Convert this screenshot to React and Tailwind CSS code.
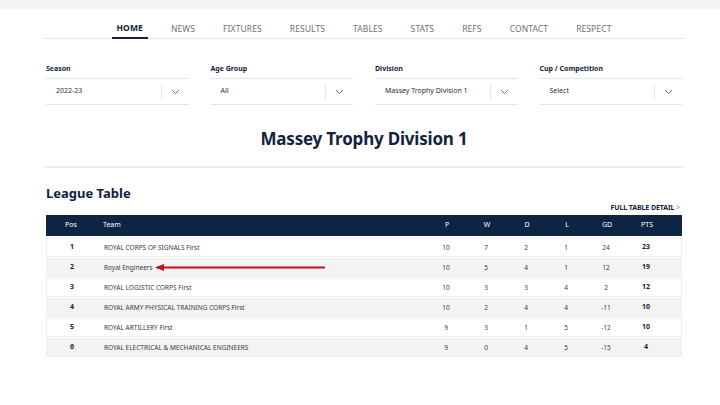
import React from "react";

const navItems = ["HOME", "NEWS", "FIXTURES", "RESULTS", "TABLES", "STATS", "REFS", "CONTACT", "RESPECT"];

const filters = [
  { label: "Season", value: "2022-23" },
  { label: "Age Group", value: "All" },
  { label: "Division", value: "Massey Trophy Division 1" },
  { label: "Cup / Competition", value: "Select" },
];

const rows = [
  { pos: 1, team: "ROYAL CORPS OF SIGNALS First", p: 10, w: 7, d: 2, l: 1, gd: 24, pts: 23 },
  { pos: 2, team: "Royal Engineers", p: 10, w: 5, d: 4, l: 1, gd: 12, pts: 19, arrow: true },
  { pos: 3, team: "ROYAL LOGISTIC CORPS First", p: 10, w: 3, d: 3, l: 4, gd: 2, pts: 12 },
  { pos: 4, team: "ROYAL ARMY PHYSICAL TRAINING CORPS First", p: 10, w: 2, d: 4, l: 4, gd: -11, pts: 10 },
  { pos: 5, team: "ROYAL ARTILLERY First", p: 9, w: 3, d: 1, l: 5, gd: -12, pts: 10 },
  { pos: 6, team: "ROYAL ELECTRICAL & MECHANICAL ENGINEERS", p: 9, w: 0, d: 4, l: 5, gd: -15, pts: 4 },
];

const cols = "grid grid-cols-[50px_1fr_40px_40px_40px_40px_40px_40px] pr-[15px] items-center";

const Chevron = () => (
  <svg width="9" height="6" viewBox="0 0 9 6" fill="none">
    <path d="M1 1l3.5 3.5L8 1" stroke="#6b7280" strokeWidth="1" />
  </svg>
);

const App = () => (
  <div className="w-[720px] h-[405px] bg-white font-['Noto_Sans',sans-serif] text-[#13223f] overflow-hidden">
    <div className="h-[9px] bg-[#f4f4f4]"></div>

    <nav className="ml-[44px] w-[640px] border-b border-[#e3e5e8] flex justify-center gap-[18px] h-[30px] items-end">
      {navItems.map((item, i) => (
        <div
          key={item}
          className={`px-[5px] pb-[4px] text-[8.5px] leading-[10px] tracking-[0.1px] ${
            i === 0 ? "font-bold text-[#13223f] border-b-2 border-[#13223f] -mb-px" : "text-[#6d7178]"
          }`}
        >
          {item}
        </div>
      ))}
    </nav>

    <div className="ml-[46px] w-[636px]">
      <div className="grid grid-cols-4 gap-x-[22px] mt-[25px]">
        {filters.map((f) => (
          <div key={f.label}>
            <div className="text-[7px] font-bold leading-[10px] h-[14px]">{f.label}</div>
            <div className="border-y border-[#e3e5e8] h-[27px] flex items-center">
              <span className="flex-1 pl-[10px] text-[7px] text-[#2f2f2f]">{f.value}</span>
              <div className="w-[28px] h-[14px] border-l border-[#e3e5e8] flex items-center justify-center">
                <Chevron />
              </div>
            </div>
          </div>
        ))}
      </div>

      <h1 className="text-center text-[17px] font-bold leading-[22px] mt-[23px] tracking-[-0.2px]">
        Massey Trophy Division 1
      </h1>
      <div className="border-b-2 border-[#ededed] -mx-[2px] mt-[16px]"></div>

      <h2 className="text-[13px] font-bold leading-[16px] mt-[17px]">League Table</h2>
      <div className="flex justify-end mt-[2px] pr-[2px]">
        <span className="text-[7px] font-bold leading-[10px] tracking-[-0.1px]">
          FULL TABLE DETAIL <span className="text-[#8a8f98] font-normal">&gt;</span>
        </span>
      </div>

      <div className={`${cols} bg-[#0d2444] text-white text-[7px] h-[21px] mt-[2px]`}>
        <span className="text-center">Pos</span>
        <span className="pl-[7px]">Team</span>
        <span className="text-center">P</span>
        <span className="text-center">W</span>
        <span className="text-center">D</span>
        <span className="text-center">L</span>
        <span className="text-center">GD</span>
        <span className="text-center">PTS</span>
      </div>

      <div className="mt-[2px] flex flex-col gap-[1px]">
        {rows.map((r, i) => (
          <div
            key={r.pos}
            className={`${cols} h-[19px] text-[6.5px] text-[#3a3a3a] border border-[#eeeeee] ${
              i % 2 === 1 ? "bg-[#f3f3f3]" : "bg-white"
            }`}
          >
            <span className="text-center font-bold text-[7px] text-[#13223f]">{r.pos}</span>
            <span className="pl-[7px] flex items-center">
              {r.team}
              {r.arrow && (
                <svg width="172" height="7" viewBox="0 0 172 7" className="ml-[2px]">
                  <path d="M2 3.5H170" stroke="#c4121d" strokeWidth="2" />
                  <path d="M0 3.5L9 0V7Z" fill="#c4121d" />
                </svg>
              )}
            </span>
            <span className="text-center">{r.p}</span>
            <span className="text-center">{r.w}</span>
            <span className="text-center">{r.d}</span>
            <span className="text-center">{r.l}</span>
            <span className="text-center">{r.gd}</span>
            <span className="text-center font-bold text-[7px] text-[#13223f]">{r.pts}</span>
          </div>
        ))}
      </div>
    </div>
  </div>
);

export default App;
